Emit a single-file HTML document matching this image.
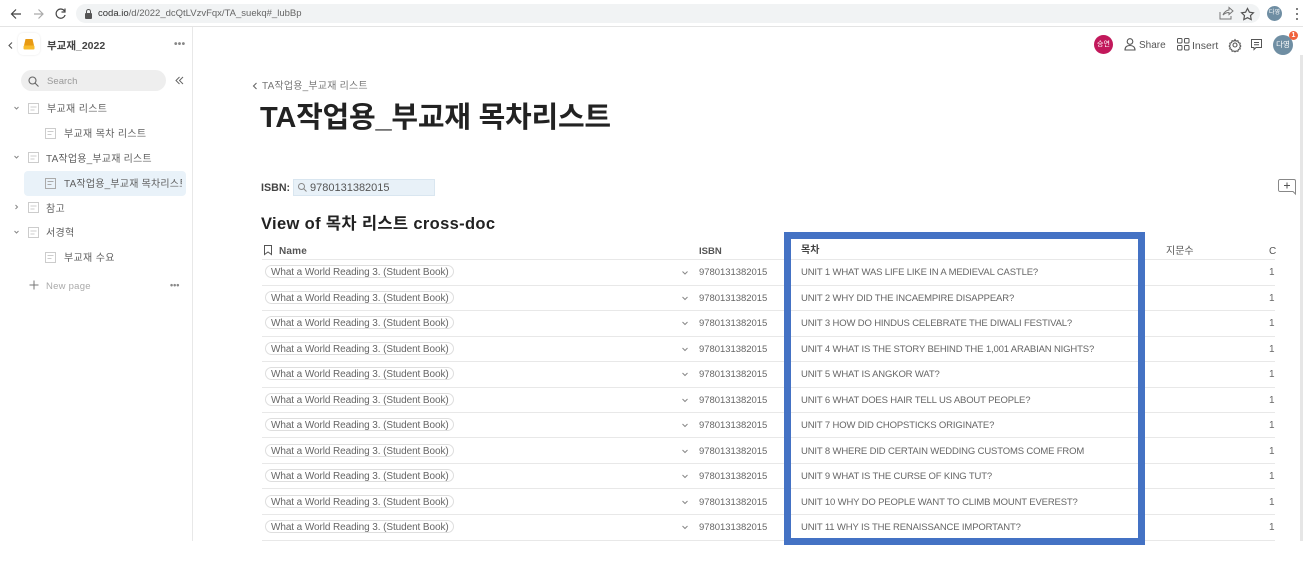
<!DOCTYPE html>
<html><head><meta charset="utf-8"><style>
html,body{margin:0;padding:0;width:1303px;height:585px;overflow:hidden;background:#fff}
body{font-family:"Liberation Sans","Noto Sans CJK KR",sans-serif;color:#555;position:relative}
.a,.t{position:absolute}
.t{white-space:nowrap;line-height:14px}
.side{font-size:10px;color:#5f5f5f;letter-spacing:.33px;margin-top:2px}
.hl{position:absolute;height:1px;background:#e8e8e8;left:262px;width:1013px}
.pill{position:absolute;left:265px;width:187px;height:11px;border:1px solid #dedede;border-radius:7px;margin-top:1px}
.nm{font-size:10px;color:#666;left:271px;letter-spacing:-.09px;margin-top:1px}
.is{font-size:9.500px;color:#666;left:699px;letter-spacing:-.03px;margin-top:1px}
.un{font-size:9.500px;color:#666;left:801px;letter-spacing:-.15px;margin-top:1px}
.one{font-size:10px;color:#666;left:1269px;margin-top:1px}
svg{position:absolute;overflow:visible}
</style></head><body>
<!-- browser bar -->
<div class="a" style="left:0;top:0;width:1303px;height:26px;background:#fff;border-bottom:1px solid #e4e4e4"></div>
<div class="a" style="left:76px;top:4px;width:1184px;height:19px;border-radius:10px;background:#f1f3f4"></div>
<svg style="left:0;top:0" width="80" height="26" fill="none" stroke-width="1.200"><path d="M21 14H12M16 9.500L11.500 14L16 18.500" stroke="#444"/><path d="M43 14H34M38.500 9.500L43 14L38.500 18.500" stroke="#aaa"/><path d="M64.500 11a4.600 4.600 0 1 0 .6 4M65 8.500V12H61.500" stroke="#444"/></svg>
<div class="a" style="left:85px;top:13px;width:7px;height:6px;background:#555;border-radius:1px"></div>
<div class="a" style="left:86px;top:9px;width:3px;height:3px;border:1px solid #555;border-bottom:0;border-radius:3px 3px 0 0"></div>
<div class="t" style="left:98px;top:7px;font-size:9.500px;color:#666"><span style="color:#333">coda.io</span>/d/2022_dcQtLVzvFqx/TA_suekq#_lubBp</div>
<svg style="left:1218px;top:6px" width="85" height="16" fill="none" stroke="#555"><path d="M2 6v7h11v-3M5 9c1-3 4-5 6-5V1.500L15 5l-4 3.500V6.500C8.500 6.500 6.500 7.500 5 9z" stroke="#777"/><path d="M29.500 2.500l1.900 3.700 4 .6-2.900 2.800.7 4-3.700-1.900-3.700 1.900.7-4-2.900-2.800 4-.6z" stroke-width="1.200"/><circle cx="79" cy="3" r="1" fill="#555" stroke="none"/><circle cx="79" cy="8" r="1" fill="#555" stroke="none"/><circle cx="79" cy="13" r="1" fill="#555" stroke="none"/></svg>
<div class="a" style="left:1267px;top:6px;width:15px;height:15px;border-radius:50%;background:#6f8ea3;color:#fff;font-size:6px;line-height:15px;text-align:center">다영</div>

<!-- sidebar -->
<div class="a" style="left:192px;top:27px;width:1px;height:514px;background:#e8e8e8"></div>
<svg style="left:8px;top:42px" width="5" height="7" fill="none" stroke="#555" stroke-width="1.100"><path d="M4 .5L1 3.500L4 6.500"/></svg>
<div class="a" style="left:18px;top:33px;width:22px;height:22px;border-radius:5px;box-shadow:0 0 2px #e5e5e5"></div>
<svg style="left:23px;top:39px" width="12" height="11"><path d="M2.500 0H9.500L11 6.500H1Z" fill="#e89a12"/><rect x="0.500" y="6.500" width="11" height="4" rx="1" fill="#f7bb2c"/></svg>
<div class="t" style="left:47px;top:39px;font-size:10.500px;color:#444;font-weight:bold">부교재_2022</div>
<div class="t" style="left:174px;top:38px;font-size:10px;color:#888;letter-spacing:.3px;font-weight:bold">•••</div>
<div class="a" style="left:21px;top:70px;width:145px;height:21px;border-radius:11px;background:#eeeeee"></div>
<svg style="left:28px;top:76px" width="11" height="11" fill="none" stroke="#666" stroke-width="1.100"><circle cx="4.500" cy="4.500" r="3.500"/><path d="M7 7l3.500 3.500"/></svg>
<div class="t" style="left:47px;top:75px;font-size:9.500px;color:#999;letter-spacing:.05px">Search</div>
<svg style="left:175px;top:76px" width="9" height="9" fill="none" stroke="#666"><path d="M4.500 1L1 4.500L4.500 8M8 1L4.500 4.500L8 8"/></svg>
<div class="a" style="left:24px;top:171px;width:162px;height:25px;border-radius:4px;background:#e9f2f9"></div>
<svg style="left:12px;top:99px" width="40" height="170" fill="none" stroke="#888"><path d="M2.500 8l2 2 2-2M2.500 57l2 2 2-2M3.500 106l2 2-2 2M2.500 132l2 2 2-2"/><g stroke="#ccc"><rect x="16.500" y="4.500" width="10" height="10"/><rect x="16.500" y="53.500" width="10" height="10"/><rect x="16.500" y="103.500" width="10" height="10"/><rect x="16.500" y="128.500" width="10" height="10"/><path d="M18.500 8h6M18.500 11h4M18.500 57h6M18.500 60h4M18.500 107h6M18.500 110h4M18.500 132h6M18.500 135h4"/></g></svg>
<svg style="left:45px;top:128px" width="12" height="136" fill="none" stroke="#ccc"><rect x=".5" y=".5" width="10" height="10"/><path d="M2.500 3.500h6M2.500 6.500h4"/><rect x=".5" y="50.500" width="10" height="10" stroke="#aaa"/><path d="M2.500 53.500h6M2.500 56.500h4" stroke="#aaa"/><rect x=".5" y="124.500" width="10" height="10"/><path d="M2.500 127.500h6M2.500 130.500h4"/></svg>
<div class="t side" style="left:47px;top:101px">부교재 리스트</div>
<div class="t side" style="left:64px;top:126px">부교재 목차 리스트</div>
<div class="t side" style="left:46px;top:151px;letter-spacing:.2px">TA작업용_부교재 리스트</div>
<div class="t side" style="left:64px;top:176px;width:118px;overflow:hidden;letter-spacing:.2px">TA작업용_부교재 목차리스트</div>
<div class="t side" style="left:46px;top:201px">참고</div>
<div class="t side" style="left:46px;top:225px">서경혁</div>
<div class="t side" style="left:64px;top:250px">부교재 수요</div>
<svg style="left:29px;top:280px" width="10" height="10" stroke="#777" fill="none"><path d="M5 .5v9M.5 5h9"/></svg>
<div class="t" style="left:46px;top:280px;font-size:9.500px;color:#aaa;letter-spacing:.25px">New page</div>
<div class="t" style="left:170px;top:278px;font-size:9px;color:#888;font-weight:bold">•••</div>

<!-- top right -->
<div class="a" style="left:1094px;top:35px;width:19px;height:19px;border-radius:50%;background:#c2185b;color:#fff;font-size:7px;line-height:19px;text-align:center">승연</div>
<svg style="left:1124px;top:38px" width="12" height="13" fill="none" stroke="#555" stroke-width="1.100"><circle cx="6" cy="3.500" r="2.800"/><path d="M1 12c0-3 2-4.500 5-4.500s5 1.500 5 4.500z"/></svg>
<div class="t" style="left:1139px;top:39px;font-size:10px;color:#555">Share</div>
<svg style="left:1177px;top:38px" width="13" height="13" fill="none" stroke="#555"><rect x=".5" y=".5" width="4.500" height="4.500" rx="1"/><rect x="7.500" y=".5" width="4.500" height="4.500" rx="1"/><rect x=".5" y="7.500" width="4.500" height="4.500" rx="1"/><rect x="7.500" y="7.500" width="4.500" height="4.500" rx="1"/></svg>
<div class="t" style="left:1192px;top:39px;font-size:10.500px;color:#555">Insert</div>
<svg style="left:1229px;top:39px" width="12" height="12" fill="none" stroke="#555" stroke-width="1.100"><path d="M6 .6l1 1.500 1.900-.3.5 1.800 1.800.6-.4 1.800 1 1-1 1.400.4 1.500-1.800.5-.5 1.800-1.900-.3-1 1-1-1-1.900.3-.5-1.800-1.800-.5.4-1.500-1-1.400 1-1-.4-1.800 1.800-.6.5-1.800 1.900.3z"/><circle cx="6" cy="6" r="2"/></svg>
<svg style="left:1251px;top:39px" width="12" height="12" fill="none" stroke="#555"><path d="M.5.5h10v8H5L3 10.500V8.500H.5z"/><path d="M3 3.500h5M3 5.800h5"/></svg>
<div class="a" style="left:1273px;top:35px;width:20px;height:20px;border-radius:50%;background:#6f8ea3;color:#fff;font-size:7.500px;line-height:20px;text-align:center">다영</div>
<div class="a" style="left:1289px;top:31px;width:9px;height:9px;border-radius:50%;background:#f0623c;color:#fff;font-size:7px;line-height:9px;text-align:center;font-weight:bold">1</div>
<div class="a" style="left:1300px;top:55px;width:3px;height:486px;background:#e6e6e6"></div>

<!-- page head -->
<svg style="left:252px;top:82px" width="6" height="8" fill="none" stroke="#666" stroke-width="1.100"><path d="M4.500 1L1.500 4L4.500 7"/></svg>
<div class="t" style="left:262px;top:80px;font-size:10px;color:#777;letter-spacing:.2px">TA작업용_부교재 리스트</div>
<div class="t" style="left:260px;top:100px;font-size:29px;line-height:36px;font-weight:bold;color:#222;letter-spacing:-.22px">TA작업용_부교재 목차리스트</div>
<div class="t" style="left:261px;top:181px;font-size:10.700px;font-weight:bold;color:#444">ISBN:</div>
<div class="a" style="left:293px;top:179px;width:140px;height:15px;background:#e8f1f8;border:1px solid #d9e6f0"></div>
<svg style="left:298px;top:183px" width="9" height="9" fill="none" stroke="#888"><circle cx="3.500" cy="3.500" r="3"/><path d="M5.500 5.500l3 3"/></svg>
<div class="t" style="left:310px;top:181px;font-size:11px;color:#555">9780131382015</div>
<div class="t" style="left:261px;top:214px;font-size:16.500px;line-height:20px;font-weight:bold;color:#222;letter-spacing:.35px">View of 목차 리스트 cross-doc</div>
<svg style="left:1278px;top:179px" width="19" height="17" fill="none" stroke="#888"><path d="M2 .5h14a1.500 1.500 0 0 1 1.500 1.500v13l-2.500-2.500H2A1.500 1.500 0 0 1 .5 11V2A1.500 1.500 0 0 1 2 .5z"/><path d="M9 3.500v6M6 6.500h6" stroke="#555"/></svg>

<!-- table head -->
<svg style="left:264px;top:245px" width="9" height="11" fill="none" stroke="#555"><path d="M.5.500h7v9L4 7 .5 9.500z"/></svg>
<div class="t" style="left:279px;top:245px;font-size:10px;font-weight:bold;color:#555;letter-spacing:.2px">Name</div>
<div class="t" style="left:699px;top:245px;font-size:9.500px;font-weight:bold;color:#555">ISBN</div>
<div class="t" style="left:801px;top:244px;font-size:10px;color:#444;font-weight:bold">목차</div>
<div class="t" style="left:1166px;top:245px;font-size:10px;color:#555">지문수</div>
<div class="t" style="left:1269px;top:245px;font-size:10px;color:#555">C</div>

<!-- rows -->
<div class="hl" style="top:259px"></div><div class="hl" style="top:285px"></div><div class="hl" style="top:310px"></div><div class="hl" style="top:336px"></div><div class="hl" style="top:361px"></div><div class="hl" style="top:387px"></div><div class="hl" style="top:412px"></div><div class="hl" style="top:437px"></div><div class="hl" style="top:463px"></div><div class="hl" style="top:488px"></div><div class="hl" style="top:514px"></div><div class="hl" style="top:540px"></div>

<div class="pill" style="top:264px"></div><div class="t nm" style="top:265px">What a World Reading 3. (Student Book)</div><div class="t is" style="top:265px">9780131382015</div><div class="t un" style="top:265px">UNIT 1 WHAT WAS LIFE LIKE IN A MEDIEVAL CASTLE?</div><div class="t one" style="top:265px">1</div>
<div class="pill" style="top:290px"></div><div class="t nm" style="top:291px">What a World Reading 3. (Student Book)</div><div class="t is" style="top:291px">9780131382015</div><div class="t un" style="top:291px">UNIT 2 WHY DID THE INCAEMPIRE DISAPPEAR?</div><div class="t one" style="top:291px">1</div>
<div class="pill" style="top:315px"></div><div class="t nm" style="top:316px">What a World Reading 3. (Student Book)</div><div class="t is" style="top:316px">9780131382015</div><div class="t un" style="top:316px">UNIT 3 HOW DO HINDUS CELEBRATE THE DIWALI FESTIVAL?</div><div class="t one" style="top:316px">1</div>
<div class="pill" style="top:341px"></div><div class="t nm" style="top:342px">What a World Reading 3. (Student Book)</div><div class="t is" style="top:342px">9780131382015</div><div class="t un" style="top:342px">UNIT 4 WHAT IS THE STORY BEHIND THE 1,001 ARABIAN NIGHTS?</div><div class="t one" style="top:342px">1</div>
<div class="pill" style="top:366px"></div><div class="t nm" style="top:367px">What a World Reading 3. (Student Book)</div><div class="t is" style="top:367px">9780131382015</div><div class="t un" style="top:367px">UNIT 5 WHAT IS ANGKOR WAT?</div><div class="t one" style="top:367px">1</div>
<div class="pill" style="top:392px"></div><div class="t nm" style="top:393px">What a World Reading 3. (Student Book)</div><div class="t is" style="top:393px">9780131382015</div><div class="t un" style="top:393px">UNIT 6 WHAT DOES HAIR TELL US ABOUT PEOPLE?</div><div class="t one" style="top:393px">1</div>
<div class="pill" style="top:417px"></div><div class="t nm" style="top:418px">What a World Reading 3. (Student Book)</div><div class="t is" style="top:418px">9780131382015</div><div class="t un" style="top:418px">UNIT 7 HOW DID CHOPSTICKS ORIGINATE?</div><div class="t one" style="top:418px">1</div>
<div class="pill" style="top:443px"></div><div class="t nm" style="top:444px">What a World Reading 3. (Student Book)</div><div class="t is" style="top:444px">9780131382015</div><div class="t un" style="top:444px">UNIT 8 WHERE DID CERTAIN WEDDING CUSTOMS COME FROM</div><div class="t one" style="top:444px">1</div>
<div class="pill" style="top:468px"></div><div class="t nm" style="top:469px">What a World Reading 3. (Student Book)</div><div class="t is" style="top:469px">9780131382015</div><div class="t un" style="top:469px">UNIT 9 WHAT IS THE CURSE OF KING TUT?</div><div class="t one" style="top:469px">1</div>
<div class="pill" style="top:494px"></div><div class="t nm" style="top:495px">What a World Reading 3. (Student Book)</div><div class="t is" style="top:495px">9780131382015</div><div class="t un" style="top:495px">UNIT 10 WHY DO PEOPLE WANT TO CLIMB MOUNT EVEREST?</div><div class="t one" style="top:495px">1</div>
<div class="pill" style="top:519px"></div><div class="t nm" style="top:520px">What a World Reading 3. (Student Book)</div><div class="t is" style="top:520px">9780131382015</div><div class="t un" style="top:520px">UNIT 11 WHY IS THE RENAISSANCE IMPORTANT?</div><div class="t one" style="top:520px">1</div>

<svg style="left:682px;top:271px" width="6" height="260" fill="none" stroke="#888"><path d="M.5.500L3 3L5.500.5M.5 26L3 28.500L5.500 26M.5 51L3 53.500L5.500 51M.5 77L3 79.500L5.500 77M.5 102L3 104.500L5.500 102M.5 128L3 130.500L5.500 128M.5 153L3 155.500L5.500 153M.5 179L3 181.500L5.500 179M.5 204L3 206.500L5.500 204M.5 230L3 232.500L5.500 230M.5 255L3 257.500L5.500 255"/></svg>

<!-- blue highlight -->
<div class="a" style="left:784px;top:232px;width:347px;height:299px;border:7px solid #4472c4"></div>
</body></html>
